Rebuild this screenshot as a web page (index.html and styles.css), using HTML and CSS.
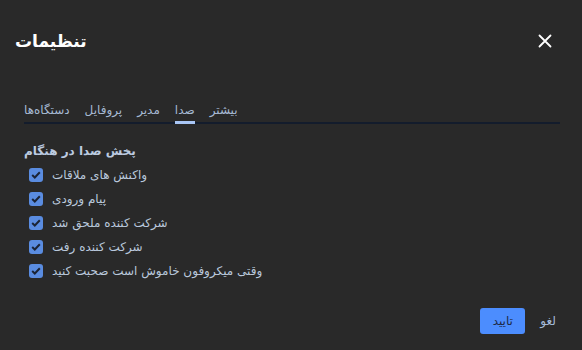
FILE: index.html
```html
<!DOCTYPE html>
<html lang="fa">
<head>
<meta charset="utf-8">
<link rel="stylesheet" href="styles.css">
</head>
<body>
<div class="dialog">
  <header class="header">
    <h1 class="title">تنظیمات</h1>
    <button class="close" aria-label="close">
      <svg width="14" height="14" viewBox="0 0 14 14"><path d="M1.5 1.5L12.5 12.5M12.5 1.5L1.5 12.5" stroke="#ffffff" stroke-width="1.8" stroke-linecap="round"/></svg>
    </button>
  </header>
  <nav class="tabs">
    <span class="tab">دستگاه‌ها</span>
    <span class="tab">پروفایل</span>
    <span class="tab">مدیر</span>
    <span class="tab active">صدا</span>
    <span class="tab">بیشتر</span>
  </nav>
  <section class="content">
    <h2 class="section-title">پخش صدا در هنگام</h2>
    <ul class="options">
      <li class="option"><span class="box"><svg width="10" height="8" viewBox="0 0 10 8"><path d="M1.2 4L3.8 6.5L8.8 1.3" fill="none" stroke="#1b2436" stroke-width="2"/></svg></span><span class="label">واکنش های ملاقات</span></li>
      <li class="option"><span class="box"><svg width="10" height="8" viewBox="0 0 10 8"><path d="M1.2 4L3.8 6.5L8.8 1.3" fill="none" stroke="#1b2436" stroke-width="2"/></svg></span><span class="label">پیام ورودی</span></li>
      <li class="option"><span class="box"><svg width="10" height="8" viewBox="0 0 10 8"><path d="M1.2 4L3.8 6.5L8.8 1.3" fill="none" stroke="#1b2436" stroke-width="2"/></svg></span><span class="label">شرکت کننده ملحق شد</span></li>
      <li class="option"><span class="box"><svg width="10" height="8" viewBox="0 0 10 8"><path d="M1.2 4L3.8 6.5L8.8 1.3" fill="none" stroke="#1b2436" stroke-width="2"/></svg></span><span class="label">شرکت کننده رفت</span></li>
      <li class="option"><span class="box"><svg width="10" height="8" viewBox="0 0 10 8"><path d="M1.2 4L3.8 6.5L8.8 1.3" fill="none" stroke="#1b2436" stroke-width="2"/></svg></span><span class="label">وقتی میکروفون خاموش است صحبت کنید</span></li>
    </ul>
  </section>
  <footer class="footer">
    <button class="btn-primary">تایید</button>
    <button class="btn-link">لغو</button>
  </footer>
</div>
</body>
</html>
```
FILE: styles.css
```css
html, body {
  margin: 0;
  padding: 0;
  background: #292929;
  width: 582px;
  height: 350px;
  overflow: hidden;
}
.dialog {
  font-family: "DejaVu Sans", sans-serif;
  display: flex;
  flex-direction: column;
  height: 350px;
  box-sizing: border-box;
}
.header {
  display: flex;
  justify-content: space-between;
  align-items: center;
  padding: 26px 30px 0 15px;
  height: 30px;
}
.title {
  margin: 0;
  font-size: 17px;
  font-weight: bold;
  color: #ffffff;
  line-height: 30px;
}
.close {
  background: none;
  border: 0;
  padding: 0;
  width: 14px;
  height: 14px;
  display: flex;
}
.tabs {
  display: flex;
  gap: 15px;
  margin: 40px 22px 0 24px;
  border-bottom: 2px solid #131c2c;
  height: 26px;
}
.tab {
  font-size: 12px;
  color: #a6b9d3;
  line-height: 28px;
  position: relative;
}
.tab.active::after {
  content: "";
  position: absolute;
  left: 0;
  right: 0;
  bottom: -2px;
  height: 3px;
  background: #a8c5f4;
}
.content {
  padding: 0 24px;
  margin-top: 18px;
}
.section-title {
  margin: 0;
  font-size: 12px;
  font-weight: bold;
  color: #bccbe0;
  line-height: 18px;
}
.options {
  list-style: none;
  margin: 3px 0 0 5px;
  padding: 0;
  display: flex;
  flex-direction: column;
}
.option {
  display: flex;
  align-items: center;
  gap: 9px;
  height: 24px;
}
.box {
  width: 14px;
  height: 14px;
  border-radius: 3px;
  background: #5a8ce0;
  display: flex;
  align-items: center;
  justify-content: center;
}
.label {
  font-size: 12px;
  color: #b9c8dc;
}
.footer {
  display: flex;
  align-items: center;
  margin-top: auto;
  margin-bottom: 16px;
  padding: 0 26px 0 24px;
  gap: 15px;
  justify-content: flex-end;
}
.btn-primary {
  font-family: inherit;
  font-size: 12px;
  background: #4c8dfe;
  color: #1e2a44;
  border: 0;
  border-radius: 3px;
  width: 45px;
  height: 26px;
  padding: 0;
}
.btn-link {
  font-family: inherit;
  font-size: 12px;
  background: none;
  border: 0;
  padding: 0;
  color: #a6bcd9;
}
```
